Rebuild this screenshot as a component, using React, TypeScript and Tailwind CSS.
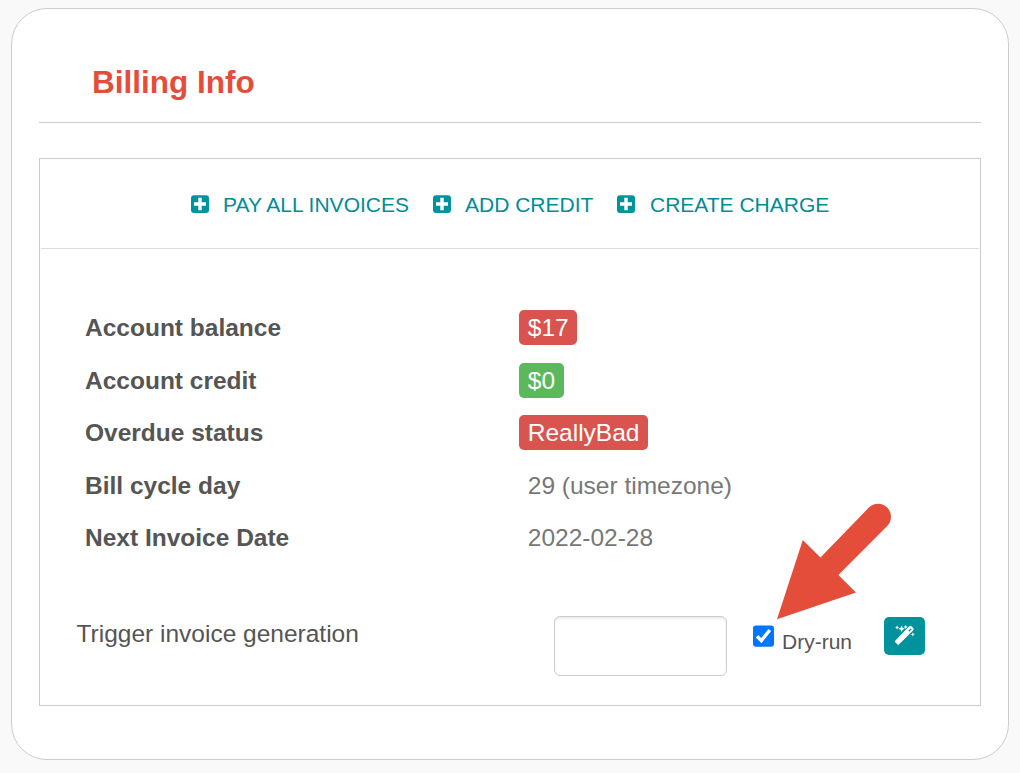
import type { ReactNode } from "react";

function PlusSquare() {
  return (
    <svg className="mb-px h-[18px] w-[18px] shrink-0" viewBox="0 0 18 18">
      <rect y="0.2" width="18" height="17.8" rx="3" fill="#00929d" />
      <path d="M7.3 2.8h3.4v4.5H15v3.4h-4.3v4.5H7.3v-4.5H3V7.3h4.3z" fill="#fff" />
    </svg>
  );
}

function Action({ label, className }: { label: string; className: string }) {
  return (
    <a href="#" className={`flex items-center whitespace-nowrap ${className}`}>
      <PlusSquare />
      <span>{label}</span>
    </a>
  );
}

function Row({ label, children }: { label: string; children: ReactNode }) {
  return (
    <div className="flex h-[52.5px] items-start leading-[35px]">
      <div className="w-[434px] shrink-0 font-bold text-[#555]">{label}</div>
      {children}
    </div>
  );
}

function Badge({ tone, children }: { tone: "red" | "green"; children: ReactNode }) {
  const color = tone === "red" ? "bg-[#d9534f]" : "bg-[#5cb85c]";
  return <span className={`rounded-[5px] px-[8.75px] text-white ${color}`}>{children}</span>;
}

function Wand() {
  return (
    <svg className="h-[22px] w-[22px]" viewBox="0 0 22 22">
      <path
        fillRule="evenodd"
        fill="#fff"
        d="M1.2 16.8 15.1 2.2q1.2-1.1 2.4 0l1.7 1.7q1.1 1.2 0 2.4L4.9 20.5q-.7.6-1.4 0l-2.3-2.3q-.6-.7 0-1.4zM14.4 6.8l.9.9L17.6 5.3 16.7 4.4z"
      />
      <path
        fill="#fff"
        d="m7.6 1.7 1 2.1 2.2 1-2.2 1-1 2.1-1-2.1-2.2-1 2.2-1zM3.1 1.5l.7 1.3 1.2.7-1.2.7-.7 1.3-.7-1.3-1.2-.7 1.2-.7zM11.6 1.1l.7 1.2 1.2.7-1.2.7-.7 1.2-.7-1.2-1.2-.7 1.2-.7zM18.8 8.4l.7 1.3 1.2.7-1.2.7-.7 1.3-.7-1.3-1.2-.7 1.2-.7z"
      />
    </svg>
  );
}

export default function App() {
  return (
    <div className="relative h-[773px] w-[1020px] overflow-hidden bg-[#f9f9f9] pt-2 pl-[11px] font-['Liberation_Sans',Arial,sans-serif] text-[24.5px] text-[#555]">
      <main className="h-[752px] w-[998px] rounded-[36px] border border-[#ccc] bg-white px-[27px]">
        <header className="h-[114px] border-b border-[#ccc] pt-[51px] pl-[53px]">
          <h1 className="text-[31.5px] leading-[44px] font-bold text-[#e44d3a]">Billing Info</h1>
        </header>
        <section className="mt-[35px] h-[548px] border border-[#ccc] px-px">
          <nav className="flex h-[90px] border-b border-[#ddd] pl-[150px] text-[21px] leading-[30px] text-[#008c98]">
            <Action label="PAY ALL INVOICES" className="h-[91px] w-[242px] gap-[14px]" />
            <Action label="ADD CREDIT" className="h-[91px] w-[184px] gap-[14px]" />
            <Action label="CREATE CHARGE" className="h-[91px] gap-[15px]" />
          </nav>
          <div className="pt-[61px] pl-[44px]">
            <Row label="Account balance">
              <Badge tone="red">$17</Badge>
            </Row>
            <Row label="Account credit">
              <Badge tone="green">$0</Badge>
            </Row>
            <Row label="Overdue status">
              <Badge tone="red">ReallyBad</Badge>
            </Row>
            <Row label="Bill cycle day">
              <span className="px-[8.75px] text-[#777]">29 (user timezone)</span>
            </Row>
            <Row label="Next Invoice Date">
              <span className="px-[8.75px] text-[#777]">2022-02-28</span>
            </Row>
          </div>
          <form className="mt-[43.5px] flex items-start pl-[36px]">
            <label htmlFor="target" className="-ml-[0.5px] w-[477.5px] leading-[35px]">
              Trigger invoice generation
            </label>
            <input
              id="target"
              className="h-[60px] w-[173px] rounded-[6px] border border-[#ccc] bg-white shadow-[inset_0_2px_2px_rgba(0,0,0,0.075)] outline-none"
            />
            <label className="ml-[26px] flex w-[99px] items-start text-[21px] leading-[30px]">
              <input type="checkbox" defaultChecked className="sr-only" />
              <svg className="mt-[9px] h-[22px] w-[21px] shrink-0" viewBox="0 0 21 22">
                <rect y="0.4" width="21" height="21.3" rx="3" fill="#0075ff" />
                <path d="m4 11.2 4.4 4.4L16.8 5" fill="none" stroke="#fff" strokeWidth="3.4" />
              </svg>
              <span className="mt-[11px] ml-2">Dry-run</span>
            </label>
            <button
              type="button"
              aria-label="Generate"
              className="mt-px ml-[32px] flex h-[38px] w-[41px] items-center justify-center rounded-[5px] bg-[#00929d] pb-[2px]"
            >
              <Wand />
            </button>
          </form>
        </section>
      </main>
      <svg className="pointer-events-none absolute top-[500px] left-[770px] h-[124px] w-[126px]" viewBox="770 500 126 124">
        <path
          d="M777 619.3 802.8 540 820.5 557.5 868.8 507.6A13 13 0 0 1 887.2 526L838.4 575 856 592.6z"
          fill="#e44d3a"
        />
      </svg>
    </div>
  );
}
